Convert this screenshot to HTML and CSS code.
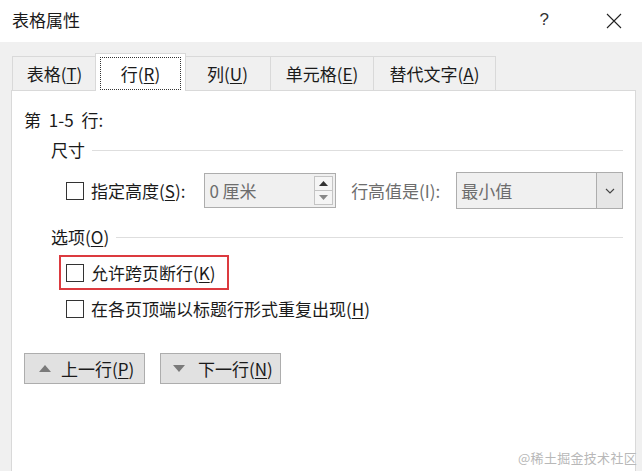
FILE: index.html
```html
<!DOCTYPE html>
<html lang="zh-CN">
<head>
<meta charset="utf-8">
<title>表格属性</title>
<link rel="stylesheet" href="styles.css">
</head>
<body>
<div class="window">
  <div class="titlebar">
    <span class="title">表格属性</span>
    <div class="title-actions">
      <span class="help">?</span>
      <span class="close">
        <svg width="16" height="16" viewBox="0 0 16 16"><path d="M1 1 L15 15 M15 1 L1 15" stroke="#222" stroke-width="1.1" fill="none"/></svg>
      </span>
    </div>
  </div>
  <div class="client">
    <div class="tabs">
      <div class="tab t1">表格(<u>T</u>)</div>
      <div class="tab active"><span class="focus">行(<u>R</u>)</span></div>
      <div class="tab t3">列(<u>U</u>)</div>
      <div class="tab t4">单元格(<u>E</u>)</div>
      <div class="tab t5">替代文字(<u>A</u>)</div>
    </div>
    <div class="panel">
      <div class="rows-label">第 1-5 行:</div>

      <div class="group-title">尺寸</div>
      <div class="size-row">
        <span class="checkbox"></span>
        <span class="label">指定高度(<u>S</u>):</span>
        <div class="spin">
          <span class="spin-value">0 厘米</span>
          <div class="spin-btns">
            <span class="spin-btn"><svg width="9" height="5" viewBox="0 0 9 5"><path d="M0 5 L4.5 0 L9 5 Z" fill="#333"/></svg></span>
            <span class="spin-btn"><svg width="9" height="5" viewBox="0 0 9 5"><path d="M0 0 L9 0 L4.5 5 Z" fill="#888"/></svg></span>
          </div>
        </div>
        <span class="label disabled rule-label">行高值是(I):</span>
        <div class="select">
          <span class="select-value">最小值</span>
          <span class="select-btn"><svg width="10" height="6" viewBox="0 0 10 6"><path d="M1 1 L5 5 L9 1" stroke="#444" stroke-width="1.1" fill="none"/></svg></span>
        </div>
      </div>

      <div class="group-title options">选项(<u>O</u>)</div>
      <div class="highlight">
        <span class="checkbox"></span>
        <span class="label">允许跨页断行(<u>K</u>)</span>
      </div>
      <div class="check-row">
        <span class="checkbox"></span>
        <span class="label">在各页顶端以标题行形式重复出现(<u>H</u>)</span>
      </div>

      <div class="buttons">
        <button class="btn prev"><svg width="12" height="7" viewBox="0 0 12 7"><path d="M0 7 L6 0 L12 7 Z" fill="#7a7a7a"/></svg><span>上一行(<u>P</u>)</span></button>
        <button class="btn next"><svg width="12" height="7" viewBox="0 0 12 7"><path d="M0 0 L12 0 L6 7 Z" fill="#7a7a7a"/></svg><span>下一行(<u>N</u>)</span></button>
      </div>
    </div>
  </div>
  <div class="watermark">@稀土掘金技术社区</div>
</div>
</body>
</html>
```

FILE: styles.css
```css
* { box-sizing: border-box; }

html, body {
  margin: 0;
  padding: 0;
}

body {
  width: 642px;
  height: 471px;
  overflow: hidden;
  font-family: "Noto Sans CJK SC", "Microsoft YaHei", sans-serif;
  font-size: 17px;
  color: #1a1a1a;
  background: #f0f0f0;
}

u { text-underline-offset: 2px; text-decoration-thickness: 1px; }

.window {
  position: relative;
  width: 642px;
  height: 471px;
  display: flex;
  flex-direction: column;
}

.titlebar {
  height: 42px;
  background: #fff;
  display: flex;
  align-items: center;
  justify-content: space-between;
  padding: 0 20px 2px 12px;
}

.title { line-height: 24px; }

.title-actions {
  display: flex;
  align-items: center;
}

.help {
  font-family: "Liberation Sans", sans-serif;
  font-size: 17px;
  color: #333;
  margin-right: 57px;
}

.close { display: flex; margin-top: 1px; }

.client {
  flex: 1;
  display: flex;
  flex-direction: column;
  padding: 11px 6px 0 11px;
}

.tabs {
  display: flex;
  align-items: flex-end;
  height: 37px;
  padding-left: 1px;
}

.tab {
  height: 34px;
  border: 1px solid #d9d9d9;
  border-bottom: none;
  background: #f0f0f0;
  display: flex;
  align-items: center;
  justify-content: center;
  line-height: 24px;
  margin-left: -1px;
}

.t1 { width: 85px; margin-left: 0; }
.t3 { width: 87px; }
.t4 { width: 104px; }
.t5 { width: 123px; }

.tab.active {
  position: relative;
  z-index: 1;
  width: 91px;
  height: 38px;
  margin: 0 -1px -1px -2px;
  background: #fff;
  padding: 3px 4px 1px;
}

.focus {
  flex: 1;
  align-self: stretch;
  display: flex;
  align-items: center;
  justify-content: center;
  border: 1px dotted #333;
}

.panel {
  flex: 1;
  background: #fff;
  border: 1px solid #d9d9d9;
  border-bottom: none;
  padding: 17px 12px 0 12px;
  display: flex;
  flex-direction: column;
}

.rows-label { line-height: 24px; word-spacing: 4px; }

.group-title {
  display: flex;
  align-items: center;
  margin: 6px 0 0 27px;
  line-height: 24px;
}

.group-title::after {
  content: "";
  flex: 1;
  height: 1px;
  background: #dedede;
  margin-left: 7px;
}

.group-title.options { margin-top: 16px; }

.checkbox {
  width: 18px;
  height: 18px;
  border: 1px solid #333;
  background: #fff;
  flex: none;
}

.label {
  line-height: 24px;
  margin-left: 7px;
  white-space: nowrap;
}

.disabled { color: #6d6d6d; }

.size-row {
  display: flex;
  align-items: center;
  margin: 10px 0 0 42px;
  height: 37px;
}

.spin {
  margin-left: 19px;
  width: 132px;
  height: 35px;
  border: 1px solid #adadad;
  background: #f0f0f0;
  display: flex;
  align-items: center;
  justify-content: space-between;
  padding: 0 2px 0 4px;
}

.spin-value { color: #6d6d6d; line-height: 24px; }

.spin-btns {
  display: flex;
  flex-direction: column;
  width: 19px;
  height: 29px;
  border: 1px solid #c4c4c4;
  background: #f5f5f5;
}

.spin-btn {
  flex: 1;
  display: flex;
  align-items: center;
  justify-content: center;
}

.spin-btn + .spin-btn { border-top: 1px solid #c4c4c4; }

.rule-label { margin-left: 15px; }

.select {
  margin-left: 16px;
  width: 167px;
  height: 37px;
  border: 1px solid #adadad;
  background: #f0f0f0;
  display: flex;
  align-items: center;
  justify-content: space-between;
  padding: 0 0 0 4px;
}

.select-value { color: #6d6d6d; line-height: 24px; }

.select-btn {
  width: 26px;
  height: 35px;
  border-left: 1px solid #adadad;
  background: #e6e6e6;
  display: flex;
  align-items: center;
  justify-content: center;
}

.highlight {
  display: flex;
  align-items: center;
  margin: 6px 0 0 35px;
  width: 170px;
  height: 35px;
  border: 2px solid #dc3a3f;
  padding-left: 5px;
}

.check-row {
  display: flex;
  align-items: center;
  margin: 7px 0 0 42px;
  height: 24px;
}

.buttons {
  display: flex;
  gap: 15px;
  margin-top: 32px;
}

.btn {
  font: inherit;
  color: #1a1a1a;
  height: 31px;
  border: 1px solid #adadad;
  background: #e1e1e1;
  display: flex;
  align-items: center;
  gap: 10px;
  padding: 0 0 0 14px;
  margin: 0;
  line-height: 24px;
}

.btn.prev { width: 121px; }
.btn.next { width: 121px; padding-left: 12px; gap: 13px; }

.watermark {
  position: absolute;
  right: 5px;
  bottom: 4px;
  font-size: 13px;
  line-height: 18px;
  color: #b8b8b8;
  letter-spacing: 0.3px;
}
```
